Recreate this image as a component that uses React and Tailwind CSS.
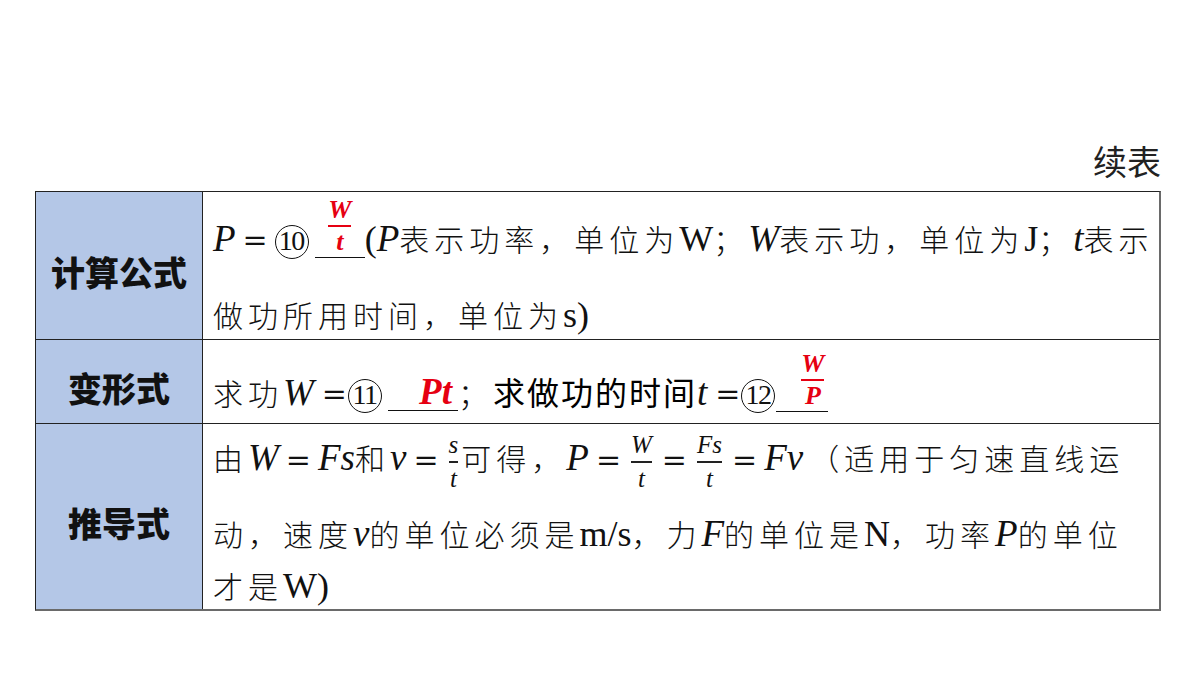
import React from "react";

const CJK = "font-['Noto_Sans_CJK_SC',sans-serif]";
const MI = "font-['Liberation_Serif',serif] italic text-[37px] tracking-normal";
const MU = "font-['Liberation_Serif',serif] not-italic text-[36px] tracking-normal";
const RED = "text-[#e60012]";

function I({ children }) {
  return <span className={MI}>{children}</span>;
}
function U({ children }) {
  return <span className={MU}>{children}</span>;
}
function Eq() {
  return <span className="font-['DejaVu_Serif',serif] not-italic text-[30px] tracking-normal mx-[7px]">=</span>;
}
function EqTight() {
  return <span className="font-['DejaVu_Serif',serif] not-italic text-[30px] tracking-normal ml-[8px] mr-[1px]">=</span>;
}
function Circ({ children }) {
  return (
    <span className="inline-flex items-center justify-center w-[34px] h-[34px] rounded-full border-[1.5px] border-[#111] font-['Liberation_Serif',serif] not-italic text-[28px] tracking-[-1.5px] leading-none pb-[1px] pr-[1px]">
      {children}
    </span>
  );
}

function MathFrac({ n, d }) {
  return (
    <span className="inline-flex flex-col items-center align-middle px-[3px] font-['Liberation_Serif',serif] italic text-[25px] tracking-normal leading-none">
      <span className="leading-[24px]">{n}</span>
      <span className="h-[1.5px] w-full bg-[#222] my-[4px]"></span>
      <span className="leading-[24px]">{d}</span>
    </span>
  );
}

function RedFrac({ n, d }) {
  return (
    <span className={"inline-block text-center font-['Liberation_Serif',serif] italic font-bold text-[26px] tracking-normal px-[1px] " + RED}>
      <span className="block leading-[24px]">{n}</span>
      <span className="block h-[2.5px] w-full bg-[#e60012] my-[3px]"></span>
      <span className="block leading-[24px]">{d}</span>
    </span>
  );
}

function Label({ children }) {
  return (
    <div className={"w-[167px] shrink-0 bg-[#b4c7e7] border-r border-r-[#222] flex items-center justify-center pt-[12px] text-[34px] font-black text-[#111] leading-none " + CJK}>
      {children}
    </div>
  );
}

export default function App() {
  return (
    <div className="w-[1200px] h-[675px] bg-white overflow-hidden">
      <div className="pt-[141px] pl-[35px] w-[1161px]">
        <div className={"text-right text-[34px] leading-[40px] text-[#222] mb-[10px] " + CJK}>续表</div>
        <div className="border-t border-l border-r-2 border-b-2 border-t-[#222] border-l-[#222] border-r-[#6a6a6a] border-b-[#6a6a6a]">
          {/* Row 1 */}
          <div className="flex h-[148px] border-b border-b-[#222]">
            <Label>计算公式</Label>
            <div className={"flex-1 pl-[10px] text-[#111] text-[30px] tracking-[5px] font-light " + CJK}>
              <div className="h-[68px] flex items-end">
                <div className="leading-[40px] whitespace-nowrap">
                  <I>P</I>
                  <Eq />
                  <Circ>10</Circ>
                  <span className="inline-block ml-[6px] w-[50px] border-b border-b-[#111] text-center">
                    <RedFrac n="W" d="t" />
                  </span>
                  <U>(</U>
                  <I>P</I>
                  表示功率，单位为
                  <U>W</U>
                  ；
                  <I>W</I>
                  表示功，单位为
                  <U>J</U>
                  ；
                  <I>t</I>
                  表示
                </div>
              </div>
              <div className="mt-[34px] h-[40px] leading-[40px] whitespace-nowrap">
                做功所用时间，单位为
                <U>s)</U>
              </div>
            </div>
          </div>

          {/* Row 2 */}
          <div className="flex h-[84px] border-b border-b-[#222]">
            <Label>变形式</Label>
            <div className={"flex-1 pl-[10px] text-[#111] text-[30px] tracking-[5px] font-light " + CJK}>
              <div className="h-[74px] flex items-end">
                <div className="leading-[40px] whitespace-nowrap">
                  求功
                  <I>W</I>
                  <EqTight />
                  <Circ>11</Circ>
                  <span className="inline-block ml-[6px] w-[70px] border-b border-b-[#111] text-right pr-[6px] leading-[36px]">
                    <span className={"font-['Liberation_Serif',serif] italic font-bold text-[37px] tracking-normal " + RED}>Pt</span>
                  </span>
                  ；
                  <span className="text-[32px] tracking-[2px] font-normal text-[#000]">求做功的时间</span>
                  <I>t</I>
                  <EqTight />
                  <Circ>12</Circ>
                  <span className="inline-block ml-[1px] w-[52px] border-b border-b-[#111] text-right pr-[3px]">
                    <RedFrac n="W" d="P" />
                  </span>
                </div>
              </div>
            </div>
          </div>

          {/* Row 3 */}
          <div className="flex h-[185px]">
            <Label>推导式</Label>
            <div className={"flex-1 pl-[10px] text-[#111] text-[30px] tracking-[5px] font-light " + CJK}>
              <div className="pt-[3px] h-[73px] flex items-center">
                <div className="leading-[40px] whitespace-nowrap">
                  由
                  <I>W</I>
                  <Eq />
                  <I>Fs</I>
                  和
                  <I>v</I>
                  <Eq />
                  <MathFrac n="s" d="t" />
                  可得，
                  <I>P</I>
                  <Eq />
                  <MathFrac n="W" d="t" />
                  <Eq />
                  <MathFrac n="Fs" d="t" />
                  <Eq />
                  <I>Fv</I>
                  <span className="ml-[6px]">（适用于匀速直线运</span>
                </div>
              </div>
              <div className="mt-[16px] h-[40px] leading-[40px] whitespace-nowrap">
                动，速度
                <I>v</I>
                的单位必须是
                <U>m/s</U>
                ，力
                <I>F</I>
                的单位是
                <U>N</U>
                ，功率
                <I>P</I>
                的单位
              </div>
              <div className="mt-[12px] h-[40px] leading-[40px] whitespace-nowrap">
                才是
                <U>W)</U>
              </div>
            </div>
          </div>
        </div>
      </div>
    </div>
  );
}
